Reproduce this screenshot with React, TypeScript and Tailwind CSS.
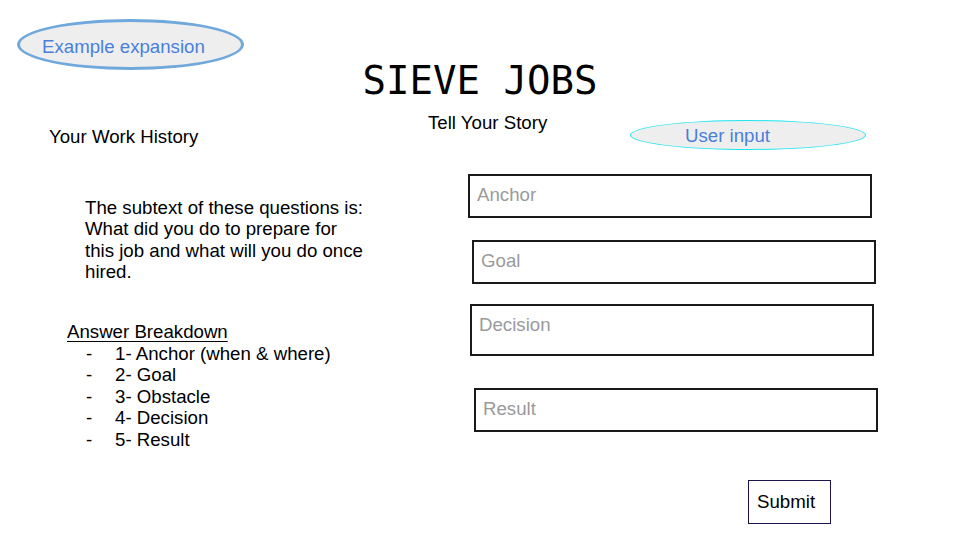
import React from "react";

const sans = { fontFamily: '"Liberation Sans", Arial, sans-serif' };

function Field({ label, className }: { label: string; className: string }) {
  return (
    <div
      className={`w-[404px] border-2 border-[#1a1a1a] pl-[7px] pt-[8px] text-[18.67px] leading-[21.6px] text-[#9a9a9a] ${className}`}
    >
      {label}
    </div>
  );
}

export default function App() {
  const items = [
    "1- Anchor (when & where)",
    "2- Goal",
    "3- Obstacle",
    "4- Decision",
    "5- Result",
  ];
  return (
    <div
      className="relative w-[960px] h-[540px] overflow-hidden bg-white text-black"
      style={sans}
    >
      {/* annotation: Example expansion */}
      <div className="absolute left-[17px] top-[19px] flex h-[51px] w-[227px] items-center rounded-[50%] border-[3px] border-[#6fa8dc] bg-[#eeeeee] pl-[22px] pt-[4px] text-[18.67px] leading-[21.6px] text-[#4a7fdc]">
        Example expansion
      </div>

      {/* annotation: User input */}
      <div className="absolute left-[630px] top-[120px] flex h-[30px] w-[236px] items-center rounded-[50%] border border-[#1fe6f0] bg-[#eeeeee] pl-[54px] pt-[2px] text-[18.67px] leading-[21.6px] text-[#4a7fdc]">
        User input
      </div>

      {/* title */}
      <div className="pt-[61px] text-center">
        <h1
          className="text-[39px] leading-[39px]"
          style={{ fontFamily: '"DejaVu Sans Mono", "Liberation Mono", monospace' }}
        >
          SIEVE JOBS
        </h1>
      </div>

      <div className="mt-[12px] flex">
        {/* left column */}
        <div className="w-[420px] text-[18.67px] leading-[21.6px]">
          <div className="ml-[49px] mt-[14px]">Your Work History</div>
          <p className="ml-[85px] mt-[49px]">
            The subtext of these questions is:
            <br />
            What did you do to prepare for
            <br />
            this job and what will you do once
            <br />
            hired.
          </p>
          <div className="ml-[67px] mt-[38px]">
            <div className="underline underline-offset-[3px]">Answer Breakdown</div>
            <ul>
              {items.map((t) => (
                <li key={t} className="flex">
                  <span className="ml-[19px] w-[29px]">-</span>
                  <span>{t}</span>
                </li>
              ))}
            </ul>
          </div>
        </div>

        {/* right column */}
        <div className="flex flex-col items-start text-[18.67px] leading-[21.6px]">
          <div className="ml-[8px]">Tell Your Story</div>
          <Field label="Anchor" className="ml-[48px] mt-[40px] h-[44px]" />
          <Field label="Goal" className="ml-[52px] mt-[22px] h-[44px]" />
          <Field label="Decision" className="ml-[50px] mt-[20px] h-[52px]" />
          <Field label="Result" className="ml-[54px] mt-[32px] h-[44px]" />
          <button
            type="button"
            className="ml-[328px] mt-[48px] h-[44px] w-[83px] border border-[#20124d] pl-[8px] text-left text-[18.67px] leading-[21.6px] text-black"
          >
            Submit
          </button>
        </div>
      </div>
    </div>
  );
}
